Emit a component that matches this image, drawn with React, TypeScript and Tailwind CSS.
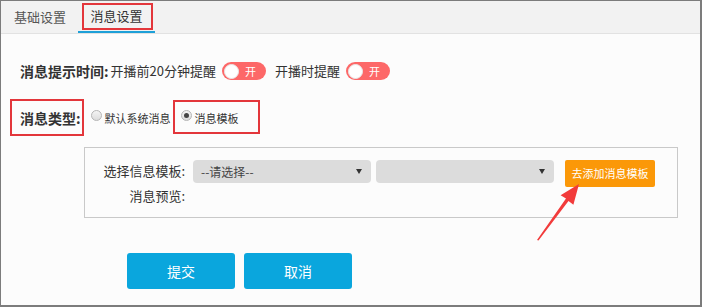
import React from "react";

function Toggle() {
  return (
    <span className="ml-[6px] flex h-[18px] w-[44px] items-center rounded-full bg-[#fd6868] pl-[2px]">
      <span className="h-[15px] w-[15px] rounded-full border border-[#e9e9e9] bg-white" />
      <span className="ml-[6px] text-[11px] leading-none text-white">开</span>
    </span>
  );
}

function Radio({ checked }: { checked?: boolean }) {
  return (
    <span className="-mt-[5px] flex h-[11px] w-[11px] items-center justify-center rounded-full border border-[#b5b5b5] bg-gradient-to-b from-[#f4f4f4] to-[#dcdcdc]">
      {checked && <span className="h-[5px] w-[5px] rounded-full bg-[#444]" />}
    </span>
  );
}

function Select({ placeholder }: { placeholder?: string }) {
  return (
    <div className="flex h-[23px] w-[178px] items-center justify-between rounded-[4px] bg-[#dcdcdc] pl-[8px] pr-[9px]">
      <span className="text-[12px] text-[#444]">{placeholder}</span>
      <span className="h-0 w-0 border-x-[3px] border-t-[5px] border-x-transparent border-t-[#333]" />
    </div>
  );
}

export default function App() {
  return (
    <div className="relative h-[307px] w-[702px] overflow-hidden border-b-2 border-l border-r-2 border-t border-[#7c7c7c] bg-[#fcfcfc] font-['Noto_Sans_CJK_SC','Noto_Sans',sans-serif] text-[#333]">
      {/* tabs */}
      <div className="flex h-[33px] border-b border-[#e2e2e2] bg-[#f2f2f2]">
        <div className="flex w-[77px] items-center pl-[13px] text-[13px] text-[#555]">基础设置</div>
        <div className="relative flex w-[77px] items-center justify-center border-b-2 border-[#1ea0d8] text-[13px] text-[#333]">
          消息设置
          <span className="absolute left-[4px] top-[2px] h-[27px] w-[71px] border-2 border-[#e3363b]" />
        </div>
      </div>

      <div className="pl-[19px]">
        {/* row 1 */}
        <div className="mt-[27px] flex h-[20px] items-center text-[13px]">
          <span className="text-[14px] font-bold">消息提示时间:</span>
          <span className="ml-[2px]">开播前20分钟提醒</span>
          <Toggle />
          <span className="ml-[9px]">开播时提醒</span>
          <Toggle />
        </div>

        {/* row 2 */}
        <div className="mt-[19px] flex h-[36px] items-center">
          <span className="relative text-[14px] font-bold">
            消息类型:
            <span className="absolute -left-[10px] -top-[9px] h-[37px] w-[74px] border-2 border-[#e3363b]" />
          </span>
          <span className="ml-[10px] flex items-center">
            <Radio />
            <span className="ml-[3px] text-[11px]">默认系统消息</span>
          </span>
          <span className="relative ml-[10px] flex items-center">
            <Radio checked />
            <span className="ml-[3px] text-[11px]">消息模板</span>
            <span className="absolute -left-[8px] -top-[10px] h-[34px] w-[87px] border-2 border-[#e3363b]" />
          </span>
        </div>

        {/* panel */}
        <div className="ml-[64px] mt-[11px] h-[71px] w-[594px] border border-[#c9c9c9] pt-[12px]">
          <div className="flex items-start">
            <span className="w-[100px] pt-[2px] text-right text-[13px] leading-[18px]">选择信息模板:</span>
            <div className="ml-[8px] flex gap-[5px]">
              <Select placeholder="--请选择--" />
              <Select />
            </div>
            <button className="ml-[11px] h-[27px] w-[90px] rounded-[2px] bg-[#fb9808] text-[11px] text-white">
              去添加消息模板
            </button>
          </div>
          <div className="w-[100px] text-right text-[13px] leading-[18px]">消息预览:</div>
        </div>

        {/* buttons */}
        <div className="ml-[107px] mt-[35px] flex gap-[9px]">
          <button className="h-[36px] w-[108px] rounded-[3px] bg-[#0aa6dd] text-[14px] text-white">提交</button>
          <button className="h-[36px] w-[108px] rounded-[3px] bg-[#0aa6dd] text-[14px] text-white">取消</button>
        </div>
      </div>

      {/* annotation arrow */}
      <svg className="absolute left-0 top-0" width="702" height="307" viewBox="0 0 702 307">
        <polygon
          points="536,239 565,197.5 559.6,194.2 578,183 572.4,203.8 567.5,200 537.5,239.5"
          fill="#f23b3b"
        />
      </svg>
    </div>
  );
}
